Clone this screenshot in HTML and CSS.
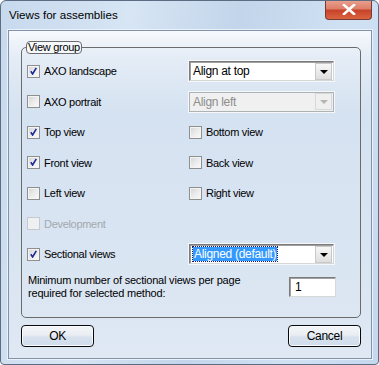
FILE: index.html
```html
<!DOCTYPE html>
<html lang="en">
<head>
    <meta charset="UTF-8">
    <title>Views for assemblies</title>
    <link rel="stylesheet" href="styles.css">
</head>
<body>

    <div class="window">
        <div class="titlebar">
            <span class="title">Views for assemblies</span>
            <div class="close-button">
                <svg width="14" height="11" viewBox="0 0 14 11"><path d="M2 1 L12 10 M12 1 L2 10" stroke="#fff" stroke-width="2.6" stroke-linecap="square"/></svg>
            </div>
        </div>

        <div class="client">
            <fieldset class="group">
                <legend>View group</legend>
                <div class="grid">
                    <label class="check"><span class="box checked"></span>AXO landscape</label>
                    <div class="combo"><span class="combo-text">Align at top</span><span class="combo-arrow"></span></div>

                    <label class="check"><span class="box"></span>AXO portrait</label>
                    <div class="combo disabled"><span class="combo-text">Align left</span><span class="combo-arrow"></span></div>

                    <label class="check"><span class="box checked"></span>Top view</label>
                    <label class="check"><span class="box"></span>Bottom view</label>

                    <label class="check"><span class="box checked"></span>Front view</label>
                    <label class="check"><span class="box"></span>Back view</label>

                    <label class="check"><span class="box"></span>Left view</label>
                    <label class="check"><span class="box"></span>Right view</label>

                    <label class="check disabled"><span class="box"></span>Development</label>
                    <div></div>

                    <label class="check"><span class="box checked"></span>Sectional views</label>
                    <div class="combo"><span class="combo-text"><span class="selected">Aligned (default)</span></span><span class="combo-arrow"></span></div>
                </div>
                <div class="minimum-row">
                    <p class="minimum-text">Minimum number of sectional views per page<br>required for selected method:</p>
                    <div class="number-box">1</div>
                </div>
            </fieldset>

            <div class="buttons">
                <button class="button">OK</button>
                <button class="button">Cancel</button>
            </div>
        </div>
    </div>

</body>
</html>
```

FILE: styles.css
```css
body {
    margin: 0;
    padding: 0;
    background-color: #ffffff;
    font-family: "Liberation Sans", Arial, sans-serif;
    font-size: 11px;
    color: #000000;
}

.window {
    width: 377px;
    height: 363px;
    border: 1px solid #5c6c82;
    border-radius: 6px 6px 4px 4px;
    background: linear-gradient(100deg, #c7d9ed 0%, #d7e5f4 30%, #c2d5ea 55%, #d0e1f3 80%, #c4d8ee 100%);
    display: flex;
    flex-direction: column;
    overflow: hidden;
}

.titlebar {
    height: 29px;
    display: flex;
    align-items: flex-start;
}

.title {
    font-size: 11.6px;
    margin-left: 8px;
    margin-top: 7px;
}

.close-button {
    margin-left: auto;
    margin-right: 6px;
    margin-top: -1px;
    width: 45px;
    height: 19px;
    border: 1px solid #7a3a34;
    border-top: none;
    border-radius: 0 0 4px 4px;
    background: linear-gradient(#eba392 0%, #dd7f69 45%, #c8432b 55%, #d9643f 100%);
    display: flex;
    align-items: center;
    justify-content: center;
}

.client {
    margin: 0 6px 0 7px;
    height: 327px;
    border: 1px solid #8292a8;
    box-shadow: 0 0 0 1px #e9f1fa;
    background: linear-gradient(#f7f9fc 0%, #e4ecf6 8%, #d5e2f1 25%, #d8e4f2 60%, #dfe8f3 100%);
}

.group {
    margin: 10px 10px 0 12px;
    padding: 2px 24px 17px 5px;
    border: 1px solid #6b6b6b;
    border-radius: 5px;
    min-width: 0;
}

.group legend {
    margin-left: -1px;
    padding: 0 1px;
    height: 11px;
    line-height: 11px;
    border: 1px solid #6b6b6b;
    border-radius: 4px;
    background-color: #f6f9fc;
    letter-spacing: -0.3px;
}

.grid {
    display: grid;
    grid-template-columns: 162px 145px;
    grid-auto-rows: 30.5px;
    align-items: center;
}

.check {
    display: flex;
    align-items: center;
    gap: 4px;
    letter-spacing: -0.3px;
}

.check.disabled {
    color: #a3a8ae;
}

.box {
    width: 11px;
    height: 11px;
    border: 1px solid #8e8f8f;
    background: linear-gradient(135deg, #d2d2d2 0%, #e9e9e9 45%, #fbfbfb 100%);
    box-shadow: inset 0 0 0 1px #f4f4f4;
    position: relative;
}

.check.disabled .box {
    border-color: #c6c9cd;
    background: #eef0f2;
    box-shadow: none;
}

.box.checked::after {
    content: "";
    position: absolute;
    left: 2px;
    top: 1px;
    width: 7px;
    height: 8px;
    background: url("data:image/svg+xml;utf8,<svg xmlns='http://www.w3.org/2000/svg' width='7' height='8'><path d='M0.8 4.3 L2.6 7 L6.3 0.8' fill='none' stroke='%231a2a96' stroke-width='1.6'/></svg>") no-repeat;
}

.combo {
    height: 16px;
    border: 1px solid #7b7b7b;
    border-right-color: #d7d7d7;
    border-bottom-color: #d7d7d7;
    box-shadow: inset 1px 1px 0 #a0a0a0, 0 0 0 1px #f5f7fa;
    background-color: #ffffff;
    display: flex;
    align-items: center;
    padding: 1px 1px 1px 3px;
}

.combo-text {
    flex: 1;
    font-size: 12px;
    letter-spacing: -0.3px;
}

.selected {
    background-color: #3399ff;
    color: #ffffff;
    padding: 0 1px;
    outline: 1px dotted #1a1a6a;
}

.combo-arrow {
    width: 15px;
    height: 15px;
    border: 1px solid #c9c9c9;
    background: linear-gradient(#f7f7f7, #dedede);
    position: relative;
}

.combo-arrow::after {
    content: "";
    position: absolute;
    left: 4px;
    top: 6px;
    border-left: 4px solid transparent;
    border-right: 4px solid transparent;
    border-top: 4px solid #000000;
}

.combo.disabled {
    background-color: #f0f0f0;
    border-color: #adb2b5;
    box-shadow: 0 0 0 1px #f5f7fa;
}

.combo.disabled .combo-text {
    color: #8d8d8d;
}

.combo.disabled .combo-arrow {
    background: #efefef;
    border-color: #d8d8d8;
}

.combo.disabled .combo-arrow::after {
    border-top-color: #b4b4b4;
}

.minimum-row {
    display: flex;
    align-items: center;
    justify-content: space-between;
    margin-top: 4px;
}

.minimum-text {
    margin: 0 0 0 1px;
    line-height: 13px;
    letter-spacing: -0.2px;
}

.number-box {
    width: 40px;
    height: 18px;
    line-height: 18px;
    padding-left: 5px;
    border: 1px solid #7b7b7b;
    border-right-color: #d7d7d7;
    border-bottom-color: #d7d7d7;
    box-shadow: inset 1px 1px 0 #a0a0a0;
    background-color: #ffffff;
    font-size: 12px;
}

.buttons {
    display: flex;
    justify-content: space-between;
    margin: 7px 10px 0 12px;
}

.button {
    width: 73px;
    height: 22px;
    border: 1px solid #0a0a0a;
    border-radius: 4px;
    background: linear-gradient(#f3f5f8 0%, #eaeef3 45%, #d8e2ee 55%, #cfdcec 100%);
    box-shadow: inset 0 0 0 1px #f8fbff;
    font-family: "Liberation Sans", Arial, sans-serif;
    font-size: 12px;
    letter-spacing: -0.3px;
    color: #000000;
    padding: 0;
}
```
